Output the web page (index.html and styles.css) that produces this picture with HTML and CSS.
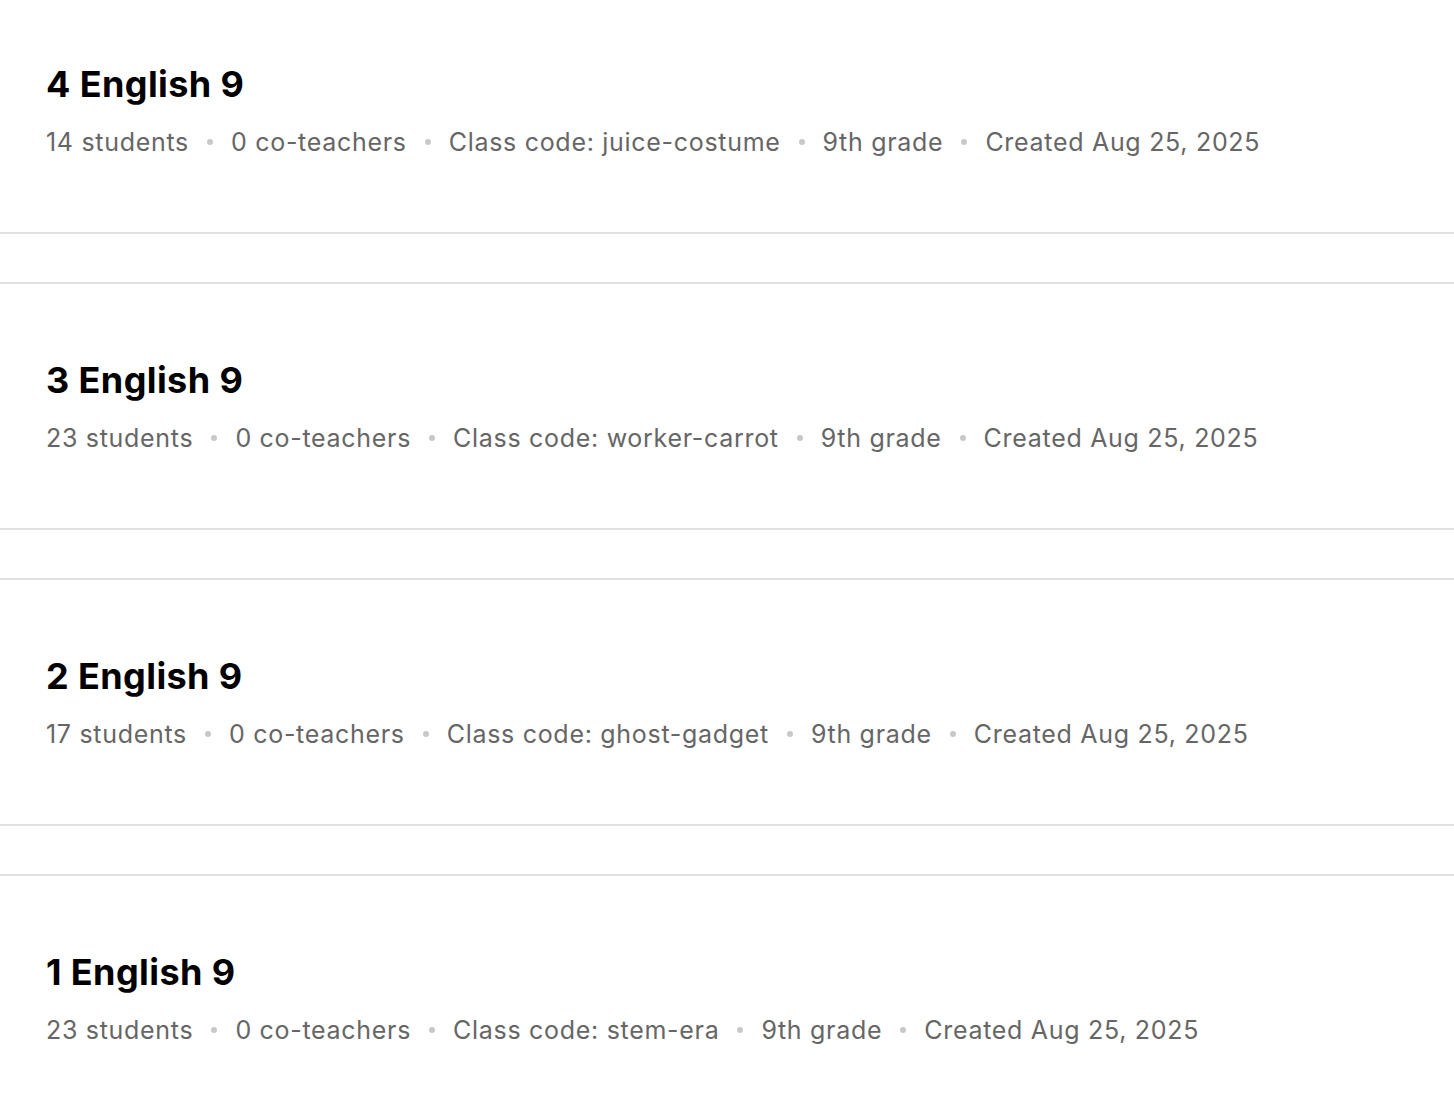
FILE: index.html
```html
<!DOCTYPE html>
<html lang="en">
<head>
<meta charset="utf-8">
<title>Classes</title>
<link rel="stylesheet" href="styles.css">
</head>
<body>
<main class="class-list">
  <section class="class-card">
    <h2 class="class-title">4 English 9</h2>
    <ul class="class-meta">
      <li>14 students</li>
      <li>0 co-teachers</li>
      <li>Class code: juice-costume</li>
      <li>9th grade</li>
      <li>Created Aug 25, 2025</li>
    </ul>
  </section>
  <section class="class-card">
    <h2 class="class-title">3 English 9</h2>
    <ul class="class-meta">
      <li>23 students</li>
      <li>0 co-teachers</li>
      <li>Class code: worker-carrot</li>
      <li>9th grade</li>
      <li>Created Aug 25, 2025</li>
    </ul>
  </section>
  <section class="class-card">
    <h2 class="class-title">2 English 9</h2>
    <ul class="class-meta">
      <li>17 students</li>
      <li>0 co-teachers</li>
      <li>Class code: ghost-gadget</li>
      <li>9th grade</li>
      <li>Created Aug 25, 2025</li>
    </ul>
  </section>
  <section class="class-card">
    <h2 class="class-title">1 English 9</h2>
    <ul class="class-meta">
      <li>23 students</li>
      <li>0 co-teachers</li>
      <li>Class code: stem-era</li>
      <li>9th grade</li>
      <li>Created Aug 25, 2025</li>
    </ul>
  </section>
</main>
</body>
</html>
```

FILE: styles.css
```css
html, body {
  margin: 0;
  padding: 0;
  background: #ffffff;
}

body {
  font-family: "Inter", "Liberation Sans", sans-serif;
  color: #000;
  overflow: hidden;
}

.class-list {
  display: flex;
  flex-direction: column;
  gap: 48px;
}

.class-card {
  border-top: 2px solid #e0e0e0;
  border-bottom: 2px solid #e0e0e0;
  padding: 74px 46px 74px;
}

/* first card is partly scrolled out of view */
.class-card:first-child {
  border-top: none;
  padding-top: 0;
  padding-bottom: 0;
  height: 232px;
  display: flex;
  flex-direction: column;
  justify-content: flex-end;
}

.class-card:first-child .class-meta {
  margin-bottom: 74px;
}

.class-title {
  margin: 0;
  font-size: 36px;
  line-height: 44px;
  font-weight: 700;
  letter-spacing: 0.4px;
}

.class-meta {
  list-style: none;
  margin: 20px 0 0;
  padding: 0;
  display: flex;
  align-items: center;
  font-size: 25px;
  line-height: 32px;
  letter-spacing: 0.7px;
  color: #666666;
}

.class-meta li {
  display: flex;
  align-items: center;
}

.class-meta li + li::before {
  content: "";
  width: 6px;
  height: 6px;
  border-radius: 50%;
  background: #c8c8c8;
  margin: 0 18px;
}
```
